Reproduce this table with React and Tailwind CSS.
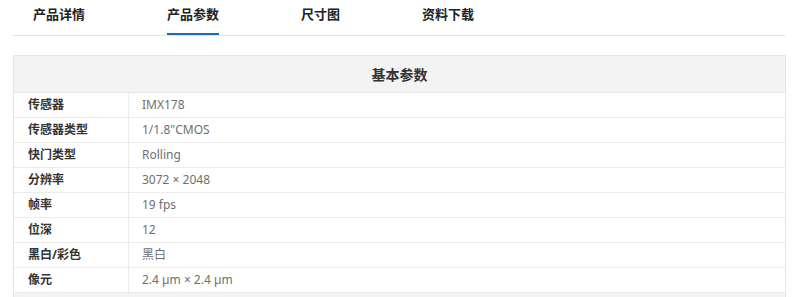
const tabs = ["产品详情", "产品参数", "尺寸图", "资料下载"];

const specs = [
  ["传感器", "IMX178"],
  ["传感器类型", "1/1.8\"CMOS"],
  ["快门类型", "Rolling"],
  ["分辨率", "3072 × 2048"],
  ["帧率", "19 fps"],
  ["位深", "12"],
  ["黑白/彩色", "黑白"],
  ["像元", "2.4 µm × 2.4 µm"],
];

export default function App() {
  return (
    <div
      className="w-[800px] bg-white pl-[13px] pr-[14px]"
      style={{ fontFamily: '"Noto Sans", "Noto Sans CJK SC", sans-serif' }}
    >
      {/* tabs */}
      <div className="flex h-[36px] gap-[82px] border-b border-[#e4e4e4] pl-[20px]">
        {tabs.map((t, i) => (
          <div
            key={t}
            className={`flex h-full items-start pt-[4px] text-[13px] font-bold leading-[20px] text-[#222] ${
              i === 1 ? "border-b-2 border-[#1a6bb8]" : ""
            }`}
          >
            {t}
          </div>
        ))}
      </div>

      {/* spec table */}
      <div className="mt-[19px] border-x border-t border-[#e6e6e6]">
        <div className="flex h-[37px] items-center justify-center border-b border-[#e6e6e6] bg-[#f3f3f3] text-[14px] font-bold text-[#333]">
          基本参数
        </div>
        {specs.map(([k, v]) => (
          <div key={k} className="flex h-[25px] border-b border-[#ebebeb] text-[12px] leading-[24px]">
            <div className="w-[115px] shrink-0 border-r border-[#ebebeb] pl-[14px] font-bold text-[#333]">
              {k}
            </div>
            <div className="pl-[13px] text-[#6f6f6f]">{v}</div>
          </div>
        ))}
        {/* next section header, only its top shows */}
        <div className="h-[37px] border-b border-[#e6e6e6] bg-[#f3f3f3]" />
      </div>
    </div>
  );
}
